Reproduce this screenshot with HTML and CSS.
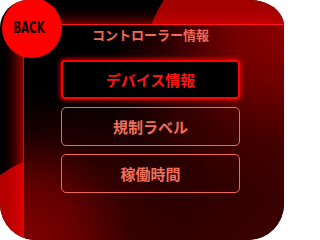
FILE: index.html
```html
<!DOCTYPE html>
<html lang="ja">
<head>
<meta charset="utf-8">
<title>コントローラー情報</title>
<link rel="stylesheet" href="styles.css">
</head>
<body>
<div class="screen">
  <div class="deco deco-top"></div>
  <div class="deco deco-bottom"></div>
  <button class="back"><span class="back-label">BACK</span></button>
  <main class="panel">
    <h1 class="title">コントローラー情報</h1>
    <nav class="menu">
      <button class="item item-active">デバイス情報</button>
      <button class="item">規制ラベル</button>
      <button class="item">稼働時間</button>
    </nav>
  </main>
</div>
</body>
</html>
```
FILE: styles.css
```css
html, body {
  margin: 0;
  padding: 0;
  background: #ffffff;
}

.screen {
  position: relative;
  width: 284px;
  height: 240px;
  overflow: hidden;
  background: #000000;
  border-radius: 28px 34px 36px 36px / 28px 26px 36px 36px;
  display: grid;
  grid-template-columns: 23px 1fr;
  grid-template-rows: 24px 1fr;
  font-family: "Noto Sans CJK JP", "Noto Sans", sans-serif;
}

.deco {
  position: absolute;
  border-radius: 50%;
  z-index: 0;
}

.deco-top {
  left: 143px;
  top: -59px;
  width: 258px;
  height: 258px;
  background: #a40000;
}

.deco-bottom {
  left: -39px;
  top: 155px;
  width: 198px;
  height: 198px;
  background: #b40000;
}

.back {
  position: absolute;
  left: 2px;
  top: -2px;
  width: 60px;
  height: 60px;
  border: 0;
  padding: 0 6px 0 0;
  margin: 0;
  border-radius: 50%;
  background: #ff0000;
  z-index: 2;
  display: flex;
  align-items: center;
  justify-content: center;
}

.back-label {
  display: inline-block;
  color: #140000;
  font-family: "DejaVu Sans Condensed", "DejaVu Sans", sans-serif;
  font-weight: bold;
  font-size: 16px;
  line-height: 1;
  transform: scaleX(0.72);
}

.panel {
  grid-column: 2;
  grid-row: 2;
  position: relative;
  z-index: 1;
  box-sizing: border-box;
  border-top: 1px solid #ff1a1a;
  border-left: 1px solid #e80000;
  padding: 0 44px 0 37px;
  display: flex;
  flex-direction: column;
  box-shadow: -5px -1px 14px rgba(255, 0, 0, 0.75);
  background:
    radial-gradient(circle at 100% 0, rgba(140, 0, 0, 1) 0, rgba(128, 0, 0, 0.85) 55px, rgba(100, 0, 0, 0.35) 120px, rgba(90, 0, 0, 0) 175px),
    radial-gradient(circle at 0 100%, rgba(130, 0, 0, 1) 0, rgba(118, 0, 0, 0.8) 55px, rgba(90, 0, 0, 0.3) 105px, rgba(80, 0, 0, 0) 150px),
    linear-gradient(135deg, #000000 22%, #250000 55%, #3e0000 100%);
}

.title {
  margin: 0;
  padding-top: 1px;
  font-size: 13px;
  line-height: 18px;
  font-weight: 600;
  color: #f06a56;
  text-align: center;
  white-space: nowrap;
}

.menu {
  margin-top: 16px;
  display: flex;
  flex-direction: column;
  gap: 8px;
}

.item {
  box-sizing: border-box;
  height: 39px;
  width: 100%;
  margin: 0;
  padding: 0;
  border: 1px solid #ef6a56;
  border-radius: 5px;
  background: transparent;
  color: #ef6f5b;
  font-family: "Noto Sans CJK JP", "Noto Sans", sans-serif;
  font-size: 15px;
  font-weight: bold;
  line-height: 1;
}

.item-active {
  border: 2px solid #ff0000;
  border-radius: 4px;
  background: #000000;
  color: #ff1414;
  box-shadow: 0 0 5px 1px rgba(255, 0, 0, 0.85);
}
```
